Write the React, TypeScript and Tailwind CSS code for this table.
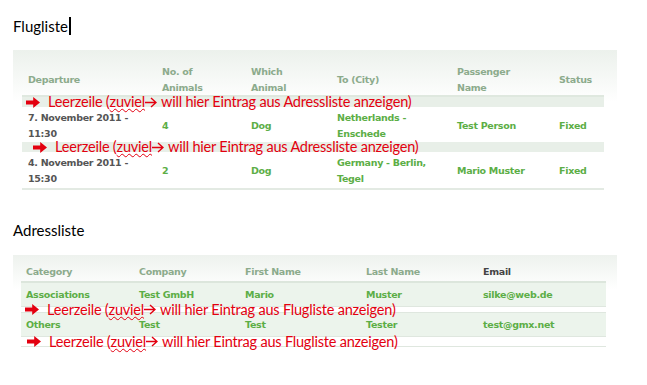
import React from "react";

const RED = "#e3000f";

function BoldArrow() {
  return (
    <svg width="14" height="11" viewBox="0 0 14 11" className="shrink-0">
      <path d="M0 3.6 H7.2 V0 L14 5.5 L7.2 11 V7.4 H0 Z" fill={RED} />
    </svg>
  );
}

function ThinArrow() {
  return (
    <svg width="12" height="11" viewBox="0 0 12 11" className="shrink-0">
      <path d="M0 5.5 H11 M6 1 L11 5.5 L6 10" fill="none" stroke={RED} strokeWidth="1.4" />
    </svg>
  );
}

function Leerzeile({ indent, target, h }: { indent: number; target: string; h: string }) {
  return (
    <div className={`flex items-center whitespace-nowrap ${h}`} style={{ paddingLeft: indent }}>
      <BoldArrow />
      <span className="ml-[8px] flex items-center font-['Lato',sans-serif] text-[14.5px] font-normal leading-[16px] tracking-[-0.2px] text-[#e3000f]">
        Leerzeile (
        <span className="underline decoration-wavy decoration-[#e3000f] decoration-1 underline-offset-[1px]">
          zuviel
        </span>
        <ThinArrow />
        <span className="ml-[4px]">will hier Eintrag aus {target} anzeigen)</span>
      </span>
    </div>
  );
}

const flugCols = ["w-[134px]", "w-[89px]", "w-[86px]", "w-[120px]", "w-[102px]", "w-[51px]"];
const adrCols = ["w-[113px]", "w-[106px]", "w-[121px]", "w-[117px]", "w-[128px]"];

export default function App() {
  return (
    <div className="h-[385px] w-[647px] overflow-hidden bg-white font-['Lato',sans-serif] text-black">
      <div className="pl-[13px] pt-[17px]">
        {/* Flugliste */}
        <div className="flex h-[18px] items-center text-[15px]">
          Flugliste
          <span className="ml-[1px] h-[18px] w-[2px] bg-black" />
        </div>

        <div className="mt-[15px] w-[604px] bg-[linear-gradient(to_bottom,#ecf1ec,#ffffff_52px)] pl-[9px] pr-[13px] pt-[14px] font-['DejaVu_Sans',Verdana,sans-serif] text-[9.5px] font-bold tracking-[-0.3px]">
          {/* header */}
          <div className="flex h-[33px] items-center border-b-2 border-[#dfe8df] leading-[16px] text-[#8cab8c]">
            <div className={`${flugCols[0]} pl-[6px]`}>Departure</div>
            <div className={`${flugCols[1]} pl-[6px]`}>No. of<br />Animals</div>
            <div className={`${flugCols[2]} pl-[6px]`}>Which<br />Animal</div>
            <div className={`${flugCols[3]} pl-[6px]`}>To (City)</div>
            <div className={`${flugCols[4]} pl-[6px]`}>Passenger<br />Name</div>
            <div className={`${flugCols[5]} pl-[6px]`}>Status</div>
          </div>
          <div className="bg-[#e8efe8]">
            <Leerzeile indent={4} target="Adressliste" h="h-[10px]" />
          </div>
          <div className="flex h-[35px] items-center pt-[3px] leading-[16px] text-[#5cae46]">
            <div className={`${flugCols[0]} pl-[6px] text-[#555]`}>7. November 2011 -<br />11:30</div>
            <div className={`${flugCols[1]} pl-[6px]`}>4</div>
            <div className={`${flugCols[2]} pl-[6px]`}>Dog</div>
            <div className={`${flugCols[3]} pl-[6px]`}>Netherlands -<br />Enschede</div>
            <div className={`${flugCols[4]} pl-[6px]`}>Test Person</div>
            <div className={`${flugCols[5]} pl-[6px]`}>Fixed</div>
          </div>
          <div className="bg-[#e8efe8]">
            <Leerzeile indent={11} target="Adressliste" h="h-[10px]" />
          </div>
          <div className="flex h-[38px] items-center border-b-2 border-[#e3eae3] pt-[2px] leading-[16px] text-[#5cae46]">
            <div className={`${flugCols[0]} pl-[6px] text-[#555]`}>4. November 2011 -<br />15:30</div>
            <div className={`${flugCols[1]} pl-[6px]`}>2</div>
            <div className={`${flugCols[2]} pl-[6px]`}>Dog</div>
            <div className={`${flugCols[3]} pl-[6px]`}>Germany - Berlin,<br />Tegel</div>
            <div className={`${flugCols[4]} pl-[6px]`}>Mario Muster</div>
            <div className={`${flugCols[5]} pl-[6px]`}>Fixed</div>
          </div>
        </div>

        {/* Adressliste */}
        <div className="mt-[31px] flex h-[18px] items-center text-[15px]">Adressliste</div>

        <div className="mt-[16px] w-[604px] bg-[linear-gradient(to_bottom,#eef2ee,#ffffff_34px)] pl-[8px] pr-[11px] pt-[8px] font-['DejaVu_Sans',Verdana,sans-serif] text-[9.5px] font-bold tracking-[-0.3px]">
          <div className="flex h-[20px] items-center border-b-2 border-[#dce6dc] text-[#8cab8c]">
            <div className={`${adrCols[0]} pl-[5px]`}>Category</div>
            <div className={`${adrCols[1]} pl-[5px]`}>Company</div>
            <div className={`${adrCols[2]} pl-[5px]`}>First Name</div>
            <div className={`${adrCols[3]} pl-[5px]`}>Last Name</div>
            <div className={`${adrCols[4]} pl-[5px] text-[#444]`}>Email</div>
          </div>
          <div className="flex h-[23px] items-center bg-[#ecf4ec] pt-[1px] text-[#5cae46]">
            <div className={`${adrCols[0]} pl-[5px]`}>Associations</div>
            <div className={`${adrCols[1]} pl-[5px]`}>Test GmbH</div>
            <div className={`${adrCols[2]} pl-[5px]`}>Mario</div>
            <div className={`${adrCols[3]} pl-[5px]`}>Muster</div>
            <div className={`${adrCols[4]} pl-[5px]`}>silke@web.de</div>
          </div>
          <div className="border-y border-[#dfe7df]">
            <Leerzeile indent={4} target="Flugliste" h="h-[5px]" />
          </div>
          <div className="flex h-[23px] items-center bg-[#ecf4ec] pt-[1px] text-[#5cae46]">
            <div className={`${adrCols[0]} pl-[5px]`}>Others</div>
            <div className={`${adrCols[1]} pl-[5px]`}>Test</div>
            <div className={`${adrCols[2]} pl-[5px]`}>Test</div>
            <div className={`${adrCols[3]} pl-[5px]`}>Tester</div>
            <div className={`${adrCols[4]} pl-[5px]`}>test@gmx.net</div>
          </div>
          <div className="border-y border-[#dfe7df]">
            <Leerzeile indent={6} target="Flugliste" h="h-[9px]" />
          </div>
        </div>
      </div>
    </div>
  );
}
